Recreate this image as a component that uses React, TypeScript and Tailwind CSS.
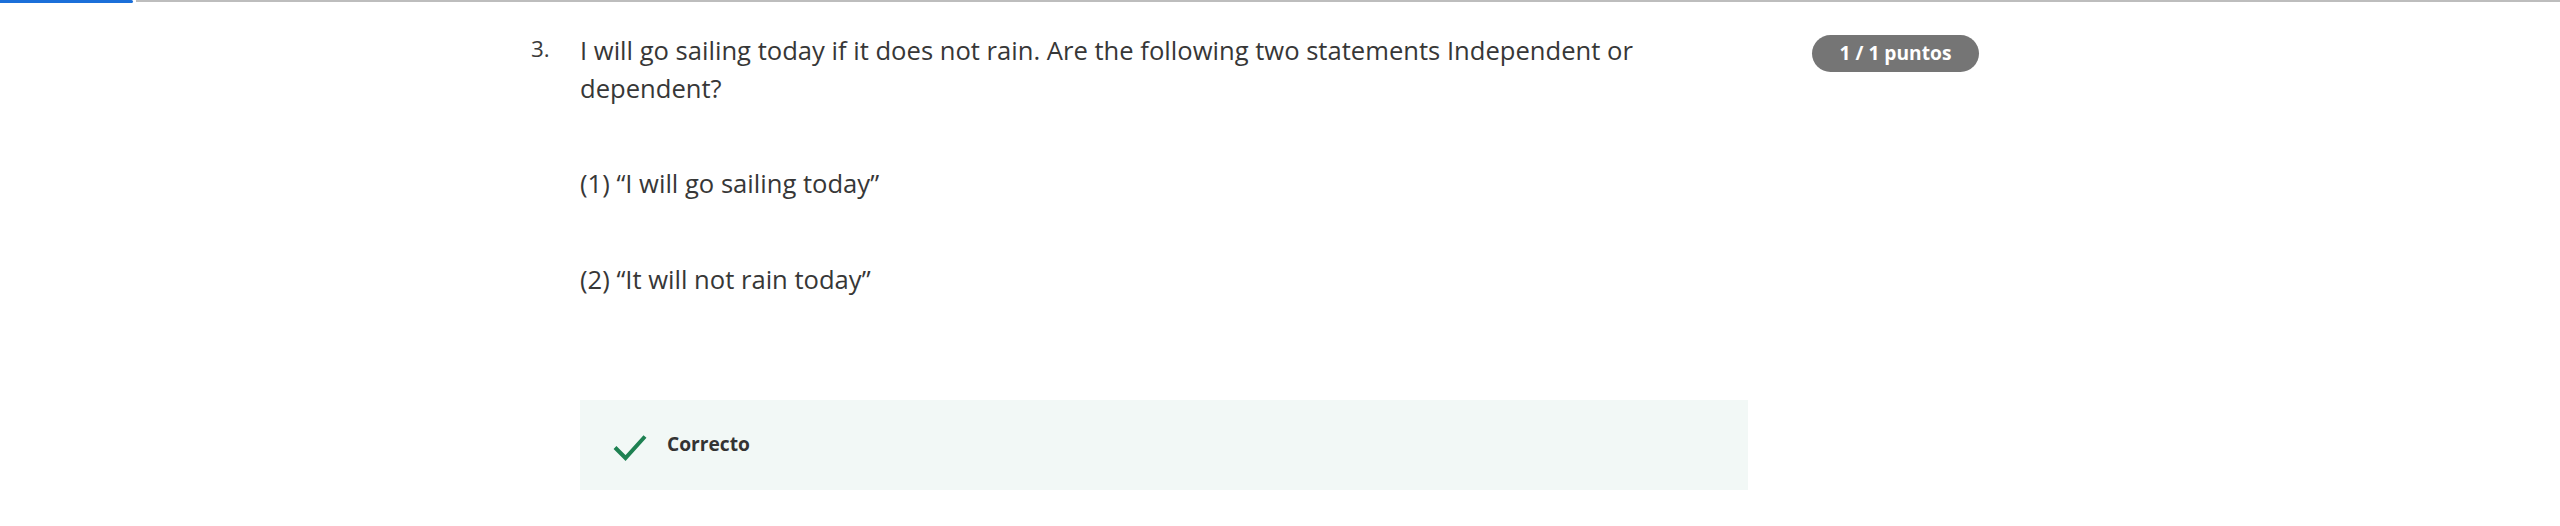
import React from "react";

export default function App() {
  const font = { fontFamily: '"Open Sans", "Noto Sans", sans-serif' };
  return (
    <div className="w-[2560px] h-[526px] bg-white overflow-hidden" style={font}>
      <div className="flex items-start h-[3px]">
        <div className="w-[133px] h-[3px] bg-[#1b6fd9] rounded-r-full" />
        <div className="flex-1 ml-[3px] h-[2px] bg-[#bdbdbd]" />
      </div>
      <div className="flex items-start pt-[27px] pl-[531px]">
        <div className="w-[49px] mt-[2px] text-[22.4px] leading-[33.6px] text-[#3a3a3a]">3.</div>
        <div className="w-[1168px] text-[#373737]">
          <div className="mt-[2px] text-[25.6px] leading-[38.4px]">
            I will go sailing today if it does not rain. Are the following two statements Independent or dependent?
          </div>
          <div className="mt-[56px] text-[25.6px] leading-[38.4px]">(1) “I will go sailing today”</div>
          <div className="mt-[58px] text-[25.6px] leading-[38.4px]">(2) “It will not rain today”</div>
          <div className="mt-[100px] h-[90px] bg-[#f2f8f6] flex items-center pl-[33px]">
            <svg width="34" height="27" viewBox="0 0 34 27" className="mt-[5px]">
              <path d="M2 13.5 L12.5 24 L32 2.5" fill="none" stroke="#1e8152" strokeWidth="4" />
            </svg>
            <span className="ml-[20px] text-[19.2px] font-bold text-[#333333]">Correcto</span>
          </div>
        </div>
        <div className="ml-[64px] mt-[5px] h-[37px] w-[167px] rounded-full bg-[#757575] text-white font-bold text-[19.2px] flex items-center justify-center">
          1 / 1 puntos
        </div>
      </div>
    </div>
  );
}
